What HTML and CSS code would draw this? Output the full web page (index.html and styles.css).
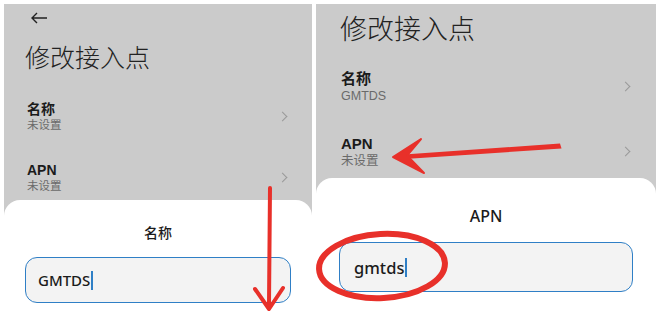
FILE: index.html
```html
<!DOCTYPE html>
<html lang="zh-CN">
<head>
<meta charset="utf-8">
<title>修改接入点</title>
<link rel="stylesheet" href="styles.css">
</head>
<body>
<div class="page">
  <section class="panel panel-left">
    <div class="topbar">
      <svg class="back" width="18" height="12" viewBox="0 0 18 12"><path d="M17 6H2M7 1L2 6L7 11" fill="none" stroke="#222" stroke-width="1.4"/></svg>
    </div>
    <h1 class="title">修改接入点</h1>
    <div class="list">
      <div class="item">
        <div class="texts"><div class="label">名称</div><div class="sub">未设置</div></div>
        <span class="chev"></span>
      </div>
      <div class="item">
        <div class="texts"><div class="label latin">APN</div><div class="sub">未设置</div></div>
        <span class="chev"></span>
      </div>
    </div>
    <div class="sheet">
      <div class="sheet-title">名称</div>
      <div class="input"><span class="value">GMTDS</span><span class="caret"></span></div>
    </div>
  </section>
  <section class="panel panel-right">
    <h1 class="title">修改接入点</h1>
    <div class="list">
      <div class="item">
        <div class="texts"><div class="label">名称</div><div class="sub latin">GMTDS</div></div>
        <span class="chev"></span>
      </div>
      <div class="item">
        <div class="texts"><div class="label latin">APN</div><div class="sub">未设置</div></div>
        <span class="chev"></span>
      </div>
    </div>
    <div class="sheet">
      <div class="sheet-title latin">APN</div>
      <div class="input"><span class="value">gmtds</span><span class="caret"></span></div>
    </div>
  </section>
  <svg class="marks" width="660" height="311" viewBox="0 0 660 311">
    <line x1="270" y1="188" x2="269" y2="304" stroke="#e8302a" stroke-width="4" stroke-linecap="round"/>
    <polyline points="255,289 269,309 283,288" fill="none" stroke="#e8302a" stroke-width="4" stroke-linejoin="round" stroke-linecap="round"/>
    <polygon points="560,143.5 561.5,148.5 405,159 404,154.5" fill="#e8302a"/>
    <polygon points="393,157 421,139 407,155.5 424,173" fill="#e8302a" stroke="#e8302a" stroke-width="2" stroke-linejoin="round"/>
    <ellipse cx="382" cy="266" rx="63" ry="32" fill="none" stroke="#e8302a" stroke-width="6" transform="rotate(-3 382 266)"/>
  </svg>
</div>
</body>
</html>
```
FILE: styles.css
```css
html, body {
  margin: 0;
  padding: 0;
  background: #ffffff;
}
.page {
  position: relative;
  width: 660px;
  height: 311px;
  overflow: hidden;
  display: flex;
  gap: 4px;
  padding: 4px 0 0 4px;
  box-sizing: border-box;
  font-family: "Liberation Sans", "Noto Sans CJK SC", sans-serif;
  color: #1b1b1b;
}
.panel {
  background: #cbcbcb;
  height: 330px;
  display: flex;
  flex-direction: column;
  overflow: hidden;
}
.panel-left { width: 308px; }
.panel-right { width: 340px; }

.topbar {
  height: 28px;
  display: flex;
  align-items: center;
  padding-left: 26px;
}
.back { display: block; }

.title {
  margin: 0;
  font-family: "Noto Sans CJK SC", sans-serif;
  font-weight: 200;
  line-height: 1;
  color: #222;
}
.panel-left .title {
  font-size: 25px;
  margin: 12px 0 0 21px;
}
.panel-right .title {
  font-size: 27px;
  margin: 9.5px 0 0 24px;
}

.list { display: flex; flex-direction: column; }
.item {
  display: flex;
  align-items: center;
  justify-content: space-between;
}
.label {
  font-weight: 700;
  color: #1b1b1b;
}
.sub { color: #6a6a6a; }

.panel-left .list { margin-top: 31px; gap: 28px; padding: 0 24px 0 23px; }
.panel-left .label { font-size: 14px; line-height: 18px; }
.panel-left .sub { font-size: 11.5px; line-height: 15px; }

.panel-right .list { margin-top: 28.5px; gap: 30px; padding: 0 25px 0 25px; }
.panel-right .label { font-size: 15px; line-height: 19px; }
.panel-right .sub { font-size: 12.5px; line-height: 16px; }

.chev {
  width: 6px;
  height: 6px;
  border-top: 1.2px solid #999;
  border-right: 1.2px solid #999;
  transform: rotate(45deg);
  margin-right: 2px;
}

.sheet {
  background: #ffffff;
  border-radius: 16px 16px 0 0;
  flex: 1;
  display: flex;
  flex-direction: column;
  align-items: stretch;
}
.panel-left .sheet { margin-top: 6px; padding: 23px 21px 0; }
.panel-right .sheet { margin-top: 9px; padding: 27px 23px 0; }

.sheet-title {
  text-align: center;
  color: #1b1b1b;
  font-family: "Noto Sans", "Noto Sans CJK SC", sans-serif;
  font-weight: 500;
}
.panel-left .sheet-title { font-size: 14px; line-height: 20px; }
.panel-right .sheet-title { font-size: 16px; line-height: 22px; }

.input {
  background: #f3f3f3;
  border: 1.5px solid #2f7fc6;
  border-radius: 12px;
  box-sizing: border-box;
  display: flex;
  align-items: center;
}
.panel-left .input { height: 46px; margin-top: 14px; padding-left: 12px; }
.panel-right .input { height: 50px; margin-top: 15px; padding-left: 14px; }

.value {
  font-family: "Noto Sans", sans-serif;
  font-weight: 500;
  color: #1b1b1b;
}
.panel-left .value { font-size: 15px; }
.panel-right .value { font-size: 16.5px; }

.caret {
  width: 1.5px;
  height: 19px;
  background: #2f7fc6;
  margin-left: 1px;
}

.marks {
  position: absolute;
  left: 0;
  top: 0;
  pointer-events: none;
}
```
